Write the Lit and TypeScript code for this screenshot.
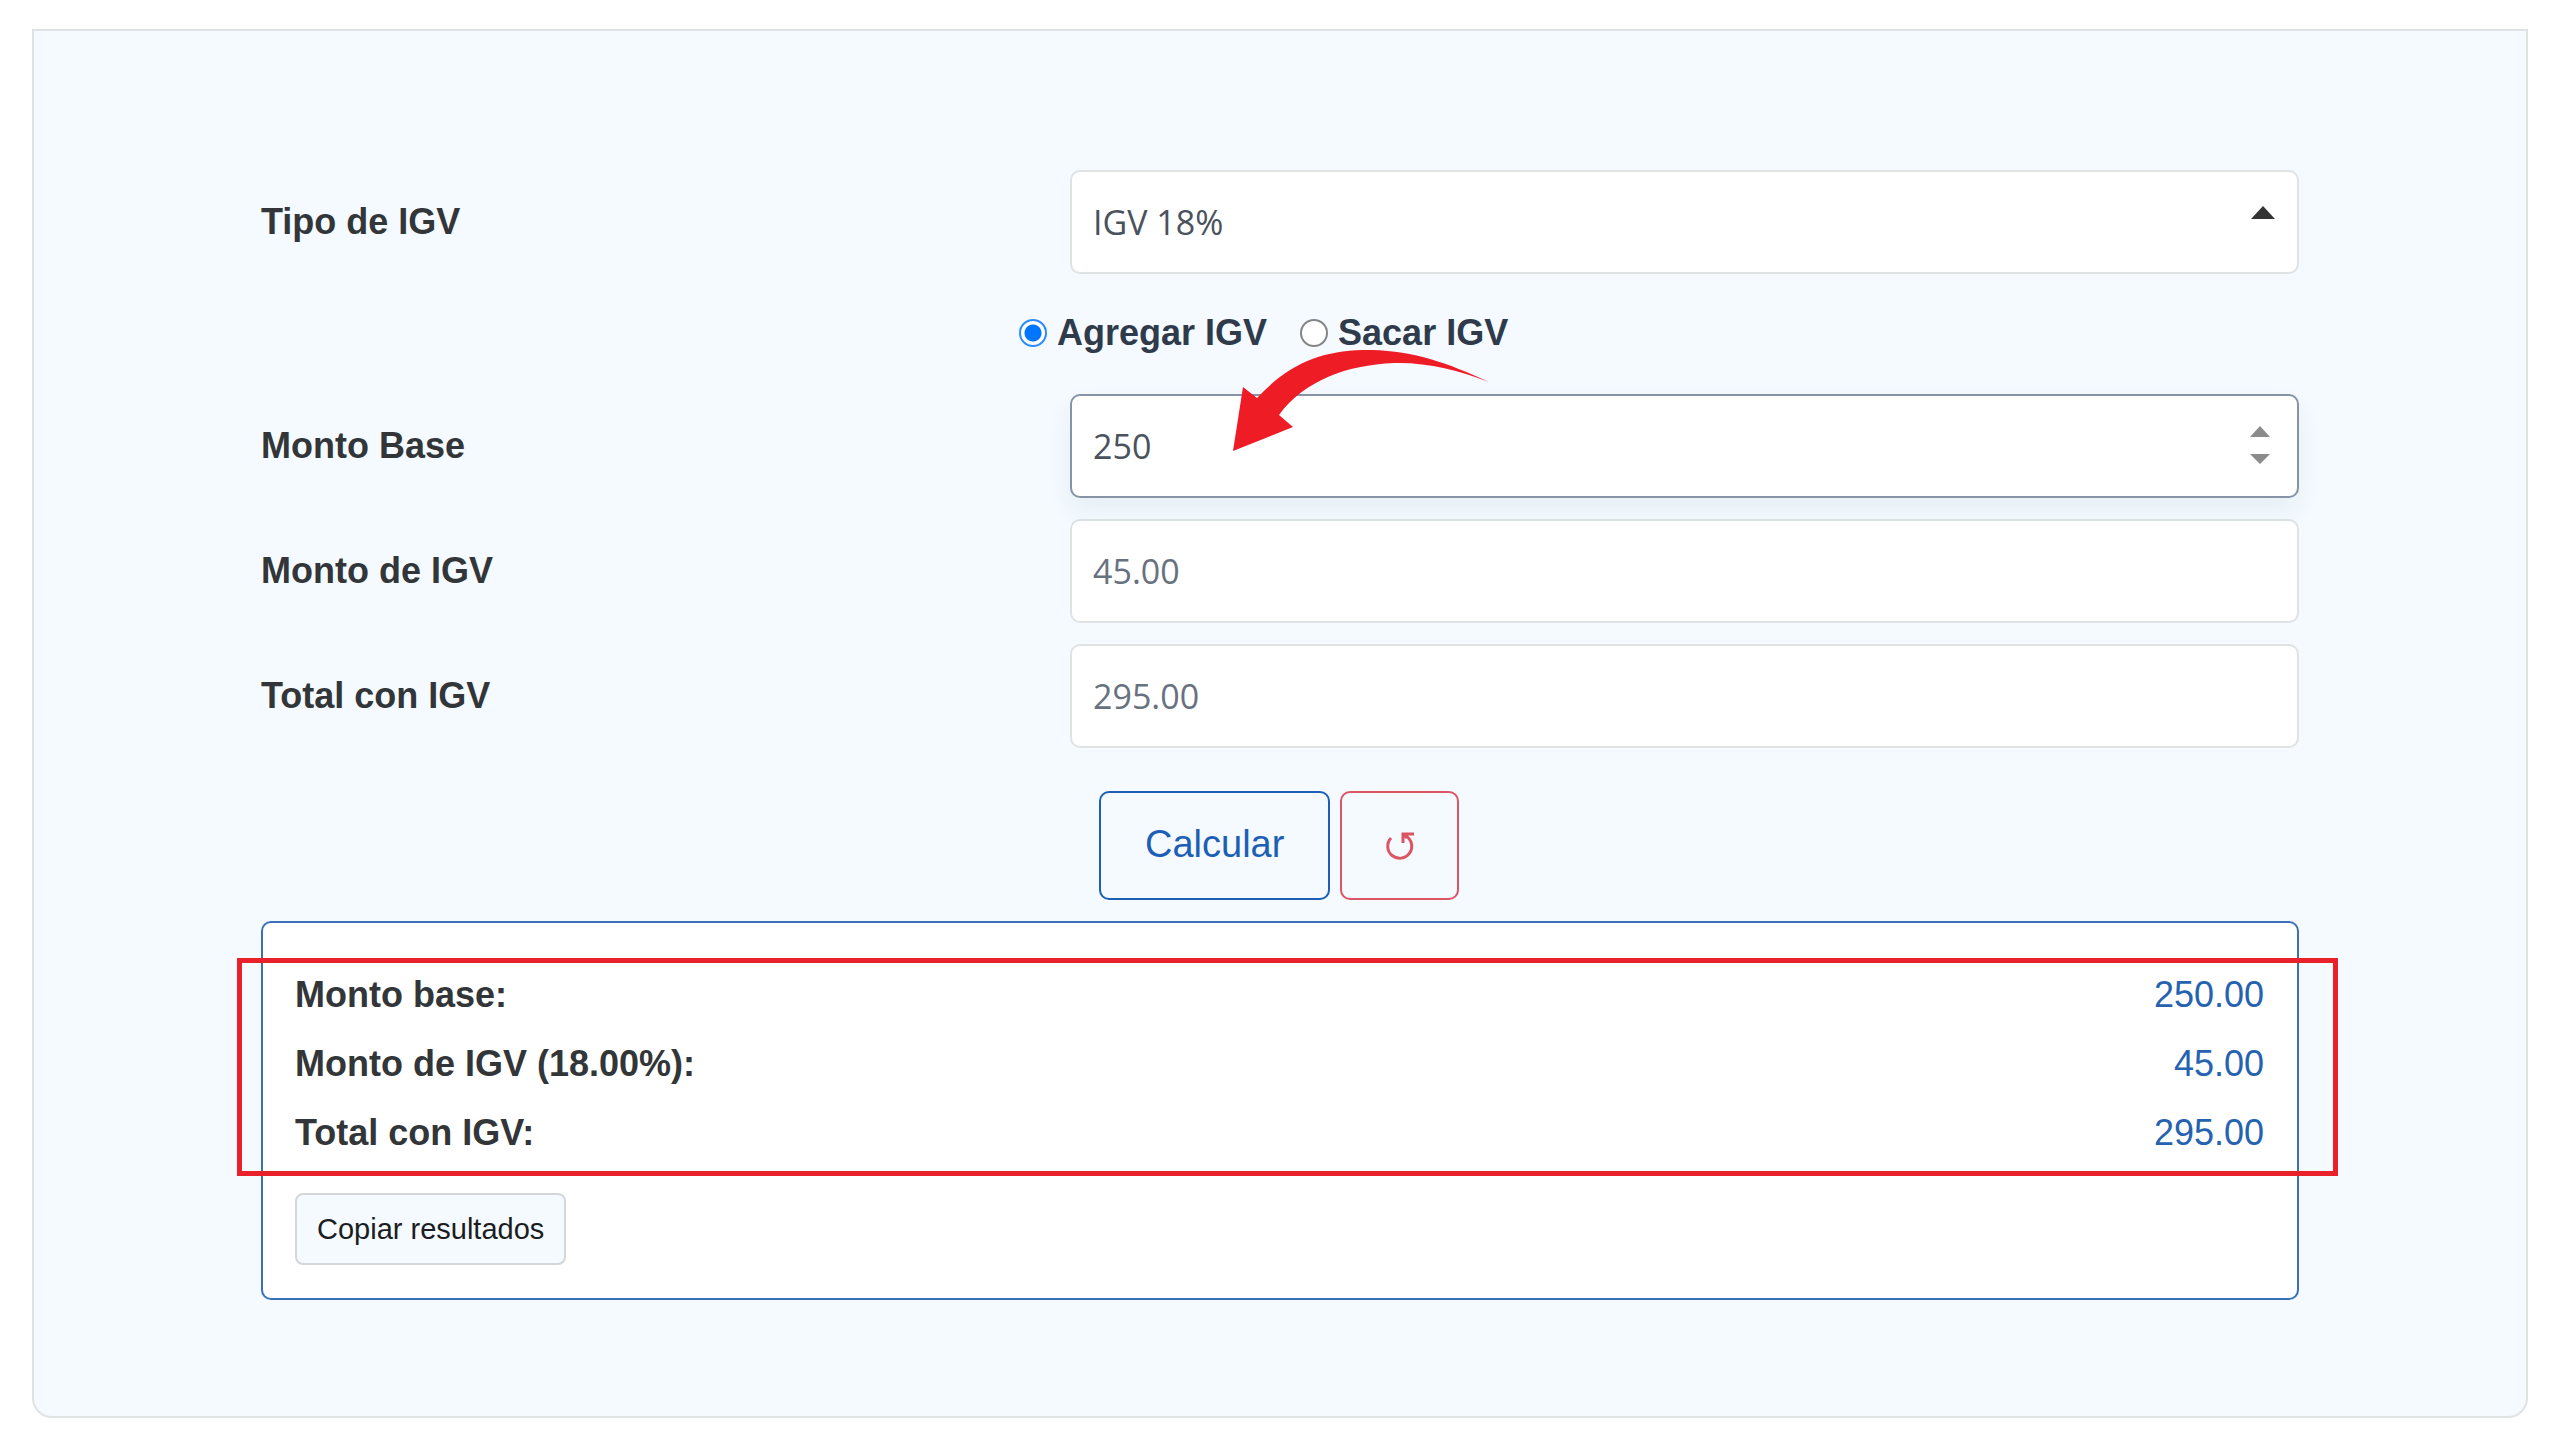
import { LitElement, html, css } from "lit";
import { customElement, state } from "lit/decorators.js";

@customElement("app-root")
export class AppRoot extends LitElement {
  static styles = css`
    :host {
      display: block;
      padding: 29px 32px 22px;
      background: #ffffff;
      color: #333638;
      font-family: "Liberation Sans", Arial, sans-serif;
      font-size: 36px;
      line-height: 42px;
    }
    * {
      box-sizing: border-box;
    }
    .panel {
      border: 2px solid #dfe3e4;
      border-radius: 0 0 20px 20px;
      background: #f4faff;
      padding: 139px 227px 116px;
    }
    .fields {
      display: grid;
      grid-template-columns: 809fr 1229fr;
      row-gap: 21px;
      align-items: center;
    }
    .label {
      font-weight: 700;
    }
    .control {
      position: relative;
      display: block;
    }
    .field {
      display: block;
      width: 100%;
      height: 104px;
      margin: 0;
      padding: 0 21px;
      border: 2px solid #dfe3e4;
      border-radius: 10px;
      background: #ffffff;
      color: #68727f;
      font-family: "Open Sans", "Noto Sans", sans-serif;
      font-size: 34px;
      line-height: 48px;
      outline: none;
      appearance: none;
      -moz-appearance: textfield;
    }
    .field::-webkit-inner-spin-button {
      appearance: none;
      margin: 0;
    }
    .field.strong {
      color: #4a525e;
    }
    .field.active {
      border-color: #8793a6;
      box-shadow: 0 12px 24px rgba(60, 90, 120, 0.07);
    }
    .marks {
      position: absolute;
      pointer-events: none;
    }
    .caret {
      top: 35px;
      right: 23px;
    }
    .spinner {
      top: 31px;
      right: 29px;
    }
    .arrow {
      top: -44px;
      left: 162px;
      z-index: 2;
    }
    .modes {
      grid-column: 1 / -1;
      display: flex;
      gap: 33px;
      padding: 17px 0 19px 758px;
    }
    .mode {
      display: flex;
      align-items: center;
      gap: 10px;
      color: #2f3b4b;
      font-weight: 700;
    }
    .radio {
      width: 28px;
      height: 28px;
      margin: 0;
      border: 2px solid #858585;
      border-radius: 50%;
      background: #ffffff;
      appearance: none;
    }
    .radio:checked {
      border-color: #2b8aff;
      background: radial-gradient(circle, #0075ff 8px, #ffffff 9px);
    }
    .actions {
      display: flex;
      gap: 10px;
      padding: 43px 0 21px 838px;
    }
    .button {
      display: flex;
      align-items: center;
      justify-content: center;
      height: 109px;
      border: 2px solid currentColor;
      border-radius: 10px;
      background: transparent;
      font: inherit;
    }
    .calculate {
      padding: 0 44px 4px;
      color: #1d5fb4;
      font-size: 38px;
    }
    .reset {
      width: 119px;
      color: #dc5563;
    }
    .results {
      position: relative;
      padding: 51px 33px 33px 32px;
      border: 2px solid #3a70b8;
      border-radius: 10px;
      background: #ffffff;
    }
    .lines {
      display: grid;
      gap: 27px;
      margin: 0 0 39px;
    }
    .line {
      display: flex;
      justify-content: space-between;
    }
    .term {
      font-weight: 700;
    }
    .amount {
      margin: 0;
      color: #2563b0;
    }
    .highlight {
      position: absolute;
      top: 35px;
      left: -26px;
      right: -41px;
      height: 218px;
      border: 5px solid #e8212b;
      pointer-events: none;
    }
    .copy {
      display: block;
      height: 72px;
      padding: 0 20px;
      border: 2px solid #d3d7da;
      border-radius: 8px;
      background: #f4faff;
      color: #1b1d20;
      font: inherit;
      font-size: 29px;
    }
  `;

  @state() private base = 250;
  @state() private rate = 18;
  @state() private adding = true;

  private get tax() {
    return this.adding
      ? (this.base * this.rate) / 100
      : this.base - this.base / (1 + this.rate / 100);
  }

  private get total() {
    return this.adding ? this.base + this.tax : this.base - this.tax;
  }

  private onBase(e: Event) {
    this.base = Number((e.target as HTMLInputElement).value) || 0;
  }

  private line(term: string, amount: number) {
    return html`<div class="line">
      <dt class="term">${term}</dt>
      <dd class="amount">${amount.toFixed(2)}</dd>
    </div>`;
  }

  render() {
    return html`
      <main class="panel">
        <div class="fields">
          <label class="label" for="rate">Tipo de IGV</label>
          <div class="control">
            <select class="field strong" id="rate">
              <option>IGV 18%</option>
            </select>
            <svg class="marks caret" width="26" height="14" viewBox="0 0 26 14" aria-hidden="true">
              <path d="M13 1 25 14H1Z" fill="#333333" />
            </svg>
          </div>

          <div class="modes" role="radiogroup">
            <label class="mode">
              <input class="radio" type="radio" name="mode" .checked=${this.adding} @change=${() => (this.adding = true)} />
              Agregar IGV
            </label>
            <label class="mode">
              <input class="radio" type="radio" name="mode" .checked=${!this.adding} @change=${() => (this.adding = false)} />
              Sacar IGV
            </label>
          </div>

          <label class="label" for="base">Monto Base</label>
          <div class="control">
            <input class="field strong active" id="base" type="number" .value=${String(this.base)} @input=${this.onBase} />
            <svg class="marks spinner" width="20" height="40" viewBox="0 0 20 40" aria-hidden="true">
              <path d="M10 1 20 12H0ZM0 29H20L10 39Z" fill="#8b8b8b" />
            </svg>
            <svg class="marks arrow" width="260" height="104" viewBox="0 0 260 104" aria-hidden="true">
              <path
                d="M1 105 11 41 25 52C58 16 94 3 140 4C182 5 216 17 257 36C226 24 194 16 162 17C114 19 72 35 47 69L61 81Z"
                transform="translate(0 -4)"
                fill="#ee1c25"
              />
            </svg>
          </div>

          <label class="label" for="tax">Monto de IGV</label>
          <input class="field" id="tax" readonly .value=${this.tax.toFixed(2)} />

          <label class="label" for="total">Total con IGV</label>
          <input class="field" id="total" readonly .value=${this.total.toFixed(2)} />
        </div>

        <div class="actions">
          <button class="button calculate" type="button">Calcular</button>
          <button class="button reset" type="button" aria-label="Reiniciar" @click=${() => (this.base = 0)}>
            <svg width="30" height="30" viewBox="0 0 30 30" fill="none" stroke="currentColor" stroke-width="3" aria-hidden="true">
              <path d="M6 7A12 12 0 1 0 21 5M29 3H18V12M19 4 22 7" />
            </svg>
          </button>
        </div>

        <section class="results">
          <dl class="lines">
            ${this.line("Monto base:", this.base)}
            ${this.line(`Monto de IGV (${this.rate.toFixed(2)}%):`, this.tax)}
            ${this.line("Total con IGV:", this.total)}
          </dl>
          <button class="copy" type="button">Copiar resultados</button>
          <div class="highlight"></div>
        </section>
      </main>
    `;
  }
}
